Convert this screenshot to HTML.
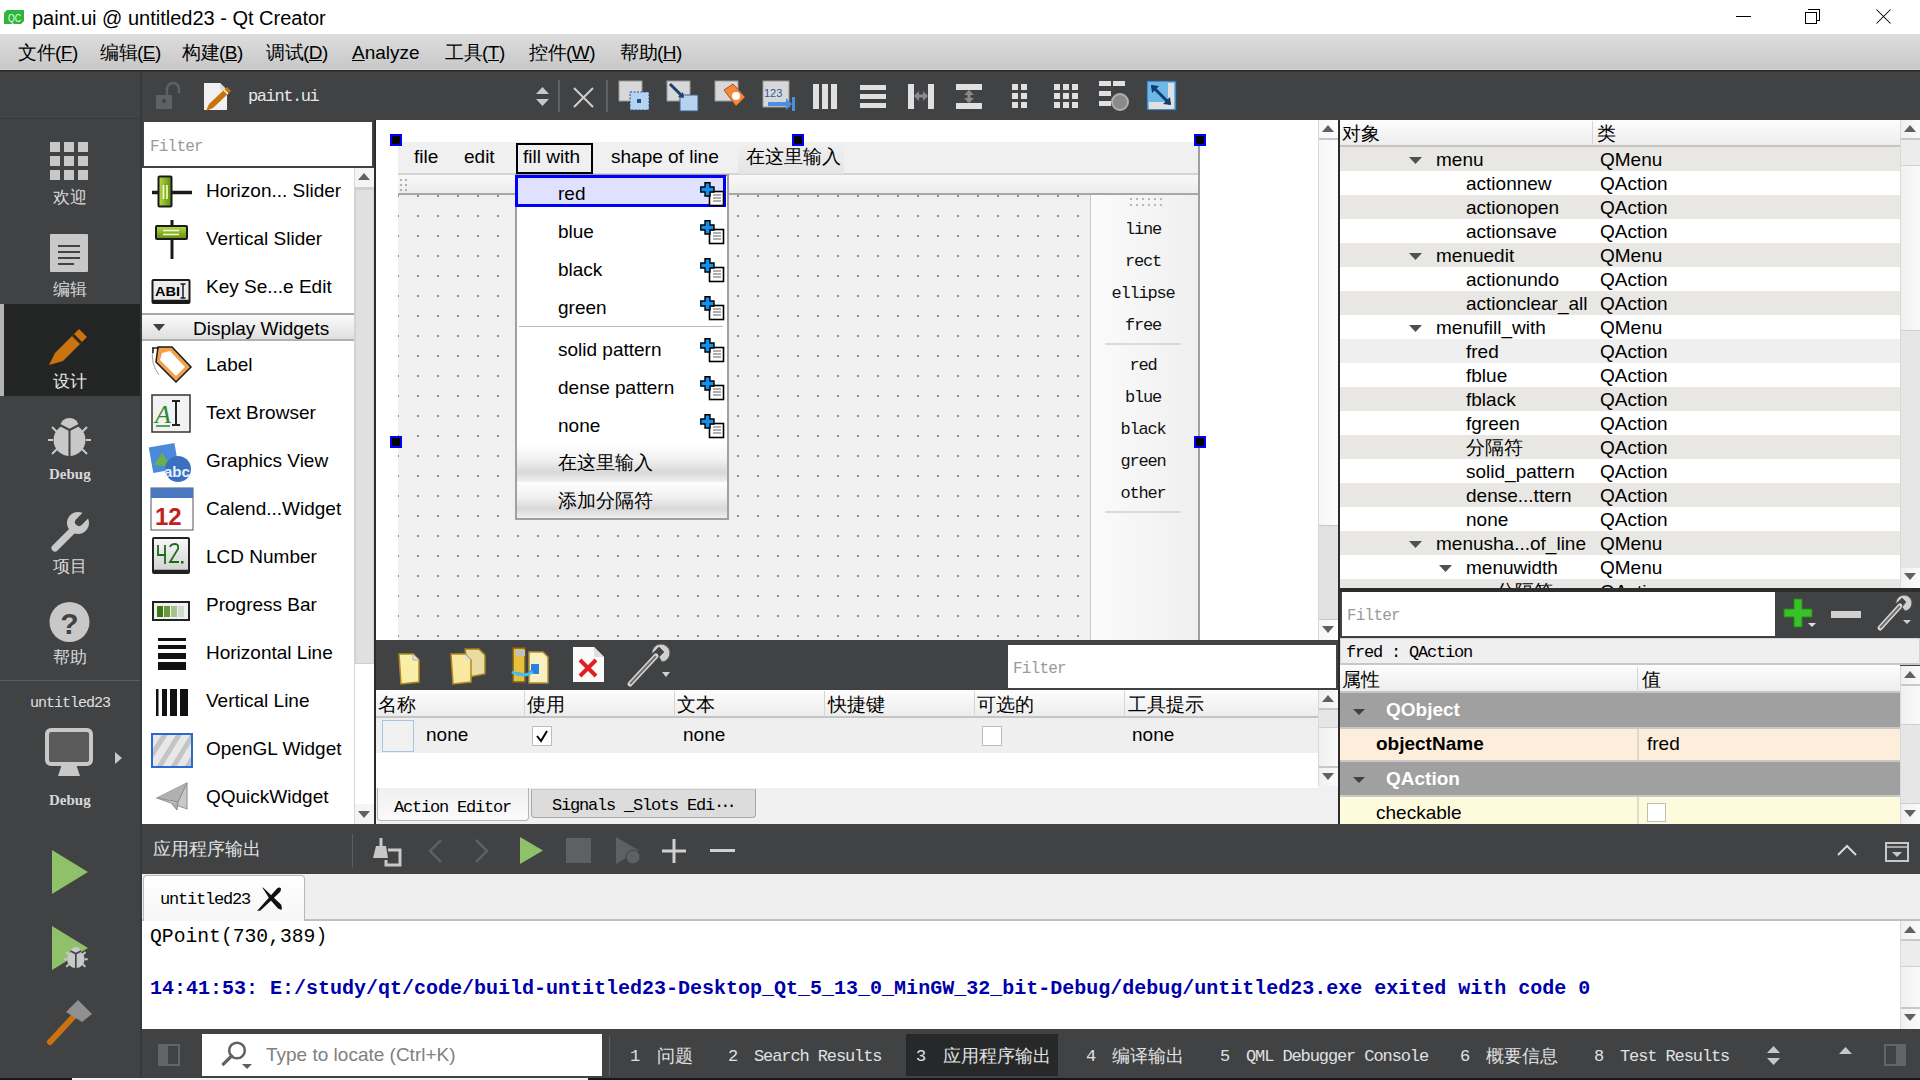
<!DOCTYPE html>
<html><head><meta charset="utf-8">
<style>
*{box-sizing:border-box;margin:0;padding:0}
html,body{width:1920px;height:1080px;overflow:hidden;background:#404244;font-family:"Liberation Sans",sans-serif;color:#000}
.a{position:absolute}
.t{position:absolute;white-space:pre;line-height:1}
.m{font-family:"Liberation Mono",monospace}
svg{position:absolute;overflow:visible}
</style></head><body>
<div class="a" style="left:0px;top:0px;width:1920px;height:34px;background:#fff"></div><svg style="left:4px;top:10px" width="21" height="15"><path d="M3 0 H20 V11 L17 14 H0 V3 Z" fill="#2fb53c"/><text x="4" y="11.5" font-size="11" fill="#e8ffe8" font-family="Liberation Sans" textLength="13" lengthAdjust="spacingAndGlyphs">QC</text></svg><div class="t" style="left:32px;top:8px;font-size:20px;">paint.ui @ untitled23 - Qt Creator</div><div class="a" style="left:1736px;top:16px;width:15px;height:1px;background:#000"></div><div class="a" style="left:1805px;top:12px;width:12px;height:12px;border:1px solid #000;background:#fff"></div><div class="a" style="left:1808px;top:9px;width:12px;height:12px;border-top:1px solid #000;border-right:1px solid #000;border-bottom:1px solid #000"></div><div class="a" style="left:1805px;top:12px;width:12px;height:12px;border:1px solid #000;background:#fff"></div><svg style="left:1876px;top:9px" width="16" height="16"><path d="M0.5 0.5L14.5 14.5M14.5 0.5L0.5 14.5" stroke="#000" stroke-width="1.05"/></svg><div class="a" style="left:0px;top:34px;width:1920px;height:35px;background:linear-gradient(#dddddd,#c8c8c8)"></div><div class="a" style="left:0px;top:69px;width:1920px;height:1px;background:#d6d6d6"></div><div class="a" style="left:0px;top:70px;width:1920px;height:1px;background:#262626"></div><div class="a" style="left:0px;top:71px;width:1920px;height:1px;background:#363738"></div><div class="t" style="left:18px;top:43px;font-size:19px;color:#000;letter-spacing:-0.5px">文件(<u>F</u>)</div><div class="t" style="left:100px;top:43px;font-size:19px;color:#000;letter-spacing:-0.5px">编辑(<u>E</u>)</div><div class="t" style="left:182px;top:43px;font-size:19px;color:#000;letter-spacing:-0.5px">构建(<u>B</u>)</div><div class="t" style="left:266px;top:43px;font-size:19px;color:#000;letter-spacing:-0.5px">调试(<u>D</u>)</div><div class="t" style="left:352px;top:43px;font-size:19px;color:#000"><u>A</u>nalyze</div><div class="t" style="left:445px;top:43px;font-size:19px;color:#000;letter-spacing:-0.5px">工具(<u>T</u>)</div><div class="t" style="left:529px;top:43px;font-size:19px;color:#000;letter-spacing:-0.5px">控件(<u>W</u>)</div><div class="t" style="left:620px;top:43px;font-size:19px;color:#000;letter-spacing:-0.5px">帮助(<u>H</u>)</div><div class="a" style="left:0px;top:72px;width:1920px;height:1008px;background:#404244"></div><div class="a" style="left:140px;top:71px;width:2px;height:1009px;background:#36383a"></div><div class="a" style="left:0px;top:118px;width:140px;height:1px;background:#353738"></div><div class="a" style="left:0px;top:304px;width:140px;height:92px;background:#232525"></div><div class="a" style="left:0px;top:304px;width:4px;height:92px;background:#b4b4b4"></div><div class="a" style="left:0px;top:680px;width:140px;height:1px;background:#5b5d5f"></div><div class="a" style="left:50px;top:142px;width:10px;height:10px;background:#c8c8c8"></div><div class="a" style="left:50px;top:156px;width:10px;height:10px;background:#c8c8c8"></div><div class="a" style="left:50px;top:170px;width:10px;height:10px;background:#c8c8c8"></div><div class="a" style="left:64px;top:142px;width:10px;height:10px;background:#c8c8c8"></div><div class="a" style="left:64px;top:156px;width:10px;height:10px;background:#c8c8c8"></div><div class="a" style="left:64px;top:170px;width:10px;height:10px;background:#c8c8c8"></div><div class="a" style="left:78px;top:142px;width:10px;height:10px;background:#c8c8c8"></div><div class="a" style="left:78px;top:156px;width:10px;height:10px;background:#c8c8c8"></div><div class="a" style="left:78px;top:170px;width:10px;height:10px;background:#c8c8c8"></div><div class="t" style="left:53px;top:189px;font-size:17px;color:#d8d8d8">欢迎</div><div class="a" style="left:50px;top:234px;width:38px;height:38px;background:#c8c8c8;border-radius:1px"></div><div class="a" style="left:58px;top:245px;width:22px;height:2px;background:#404244"></div><div class="a" style="left:58px;top:251px;width:22px;height:2px;background:#404244"></div><div class="a" style="left:58px;top:257px;width:22px;height:2px;background:#404244"></div><div class="a" style="left:58px;top:263px;width:16px;height:2px;background:#404244"></div><div class="t" style="left:53px;top:281px;font-size:17px;color:#d8d8d8">编辑</div><svg style="left:47px;top:325px" width="44" height="44"><path d="M2 40 L8 28 L32 4 L40 12 L16 36 Z" fill="#c9720e"/><path d="M26 10 L34 18" stroke="#262829" stroke-width="3"/></svg><div class="t" style="left:53px;top:373px;font-size:17px;color:#e8e8e8">设计</div><svg style="left:48px;top:416px" width="44" height="44"><ellipse cx="21.5" cy="10" rx="9" ry="8" fill="#c8c8c8"/><ellipse cx="21.5" cy="24" rx="16" ry="16" fill="#c8c8c8"/><path d="M12 9 L21.5 14 L31 9 M21.5 14 V41" stroke="#404244" stroke-width="2" fill="none"/><path d="M9 16 L4 11 M5 24 H0 M9 33 L4 38 M34 16 L39 11 M38 24 H43 M34 33 L39 38" stroke="#c8c8c8" stroke-width="2"/></svg><div class="t" style="left:49px;top:467px;font-size:15px;color:#d8d8d8;font-weight:bold;font-family:'Liberation Serif',serif">Debug</div><svg style="left:48px;top:506px" width="46" height="46"><path d="M7 42 L25 24" stroke="#c8c8c8" stroke-width="7" stroke-linecap="round"/><circle cx="30" cy="17" r="11" fill="#c8c8c8"/><path d="M31 16 L44 3" stroke="#404244" stroke-width="8" stroke-linecap="round"/></svg><div class="t" style="left:53px;top:558px;font-size:17px;color:#d8d8d8">项目</div><svg style="left:49px;top:601px" width="42" height="42"><circle cx="20.5" cy="21" r="20" fill="#c8c8c8"/><text x="20.5" y="33" font-size="30" font-weight="bold" text-anchor="middle" fill="#404244" font-family="Liberation Sans">?</text></svg><div class="t" style="left:53px;top:649px;font-size:17px;color:#d8d8d8">帮助</div><div class="t m" style="left:30px;top:696px;font-size:15px;color:#e0e0e0;letter-spacing:-1px">untitled23</div><svg style="left:45px;top:728px" width="82" height="50"><rect x="2" y="2" width="44" height="34" rx="4" fill="#5a5a5a" stroke="#c8c8c8" stroke-width="4"/><path d="M17 36 L31 36 L35 48 L13 48 Z" fill="#c8c8c8"/><path d="M70 24 L77 30 L70 36 Z" fill="#c8c8c8"/></svg><div class="t" style="left:49px;top:793px;font-size:15px;color:#d8d8d8;font-weight:bold;font-family:'Liberation Serif',serif">Debug</div><svg style="left:52px;top:850px" width="40" height="46"><path d="M0 0 L36 22 L0 44 Z" fill="#8fc06a"/></svg><svg style="left:52px;top:926px" width="46" height="50"><path d="M0 0 L36 22 L0 44 Z" fill="#8fc06a"/><g transform="translate(12,20) scale(0.55)"><ellipse cx="21.5" cy="10" rx="9" ry="8" fill="#c8c8c8"/><ellipse cx="21.5" cy="24" rx="16" ry="16" fill="#c8c8c8"/><path d="M12 9 L21.5 14 L31 9 M21.5 14 V41" stroke="#404244" stroke-width="3" fill="none"/><path d="M9 16 L4 11 M5 24 H0 M9 33 L4 38 M34 16 L39 11 M38 24 H43 M34 33 L39 38" stroke="#c8c8c8" stroke-width="3.5"/></g></svg><svg style="left:46px;top:1000px" width="50" height="46"><path d="M4 42 L30 14" stroke="#c9720e" stroke-width="6" stroke-linecap="round"/><path d="M20 12 L32 0 L46 14 L36 22 Z" fill="#909090"/></svg><svg style="left:155px;top:82px" width="28" height="28"><rect x="1" y="13" width="16" height="14" fill="#5e6062"/><path d="M12 13 V7 A6 6 0 0 1 24 7 V11" stroke="#5e6062" stroke-width="2.5" fill="none"/><circle cx="9" cy="19" r="2" fill="#404244"/></svg><svg style="left:203px;top:82px" width="30" height="30"><path d="M1 1 H17 L24 8 V28 H1 Z" fill="#f0f0f0"/><path d="M17 1 V8 H24" fill="#dcdcdc"/><path d="M3 29 L6 22 L24 5 L28 9 L10 26 Z" fill="#c9720e"/><path d="M21 8 L25 12" stroke="#fff" stroke-width="1.5"/></svg><div class="t m" style="left:248px;top:88px;font-size:17px;color:#e8e8e8;letter-spacing:-1.4px">paint.ui</div><svg style="left:535px;top:86px" width="16" height="22"><path d="M1 8 L7.5 1 L14 8 Z M1 13 L7.5 20 L14 13 Z" fill="#c8c8c8"/></svg><div class="a" style="left:558px;top:80px;width:2px;height:32px;background:#5e6062"></div><svg style="left:573px;top:87px" width="22" height="22"><path d="M1 1 L20 20 M20 1 L1 20" stroke="#d0d0d0" stroke-width="2"/></svg><div class="a" style="left:606px;top:80px;width:2px;height:32px;background:#5e6062"></div><svg style="left:618px;top:80px" width="34" height="32"><rect x="1" y="1" width="23" height="20" fill="#d8d8d8" stroke="#9a9a9a"/><rect x="12" y="12" width="19" height="18" fill="#b7d3f2" stroke="#1f4f8f" stroke-dasharray="2 1.5"/><rect x="19" y="19" width="4" height="4" fill="#1f4f8f"/></svg><svg style="left:666px;top:80px" width="34" height="32"><rect x="1" y="1" width="23" height="20" fill="#d8d8d8" stroke="#9a9a9a"/><rect x="14" y="15" width="18" height="16" fill="#b7d3f2" stroke="#3d5f86"/><path d="M4 4 L16 16" stroke="#1f3f6f" stroke-width="3"/><path d="M12 17 L18 18 L17 12 Z" fill="#1f3f6f"/></svg><svg style="left:714px;top:80px" width="34" height="32"><rect x="1" y="1" width="23" height="20" fill="#d8d8d8" stroke="#9a9a9a"/><path d="M10 10 L19 4 L31 17 L22 26 Z" fill="#f08a3c" stroke="#b05010"/><circle cx="22" cy="16" r="4" fill="#fff"/></svg><svg style="left:762px;top:80px" width="34" height="32"><rect x="1" y="1" width="26" height="26" fill="#d8d8d8" stroke="#9a9a9a"/><text x="2" y="17" font-size="11" fill="#2a5aa0" font-family="Liberation Sans">123</text><path d="M6 24 H26" stroke="#4a90e2" stroke-width="4"/><path d="M24 18 L30 24 L24 30 Z" fill="#4a90e2"/><rect x="30" y="17" width="3" height="14" fill="#4a90e2"/></svg><svg style="left:810px;top:80px" width="34" height="32"><g fill="#e0e0e0"><rect x="3" y="4" width="6" height="25"/><rect x="12" y="4" width="6" height="25"/><rect x="21" y="4" width="6" height="25"/></g></svg><svg style="left:858px;top:80px" width="34" height="32"><g fill="#e0e0e0"><rect x="2" y="5" width="26" height="5"/><rect x="2" y="14" width="26" height="5"/><rect x="2" y="23" width="26" height="5"/></g></svg><svg style="left:906px;top:80px" width="34" height="32"><g fill="#e0e0e0"><rect x="2" y="4" width="6" height="25"/><rect x="22" y="4" width="6" height="25"/></g><path d="M9 16 H21" stroke="#8a8a8a" stroke-width="3"/><path d="M8 16 L13 11 V21 Z M22 16 L17 11 V21 Z" fill="#8a8a8a"/></svg><svg style="left:954px;top:80px" width="34" height="32"><g fill="#e0e0e0"><rect x="2" y="4" width="26" height="6"/><rect x="2" y="23" width="26" height="6"/></g><path d="M15 11 V22" stroke="#8a8a8a" stroke-width="3"/><path d="M15 10 L10 15 H20 Z M15 23 L10 18 H20 Z" fill="#8a8a8a"/></svg><svg style="left:1002px;top:80px" width="34" height="32"><g fill="#e0e0e0"><rect x="10" y="4" width="6" height="6"/><rect x="19" y="4" width="6" height="6"/><rect x="10" y="13" width="6" height="6"/><rect x="19" y="13" width="6" height="6"/><rect x="10" y="22" width="6" height="6"/><rect x="19" y="22" width="6" height="6"/></g></svg><svg style="left:1050px;top:80px" width="34" height="32"><g fill="#e0e0e0"><rect x="4" y="4" width="6" height="6"/><rect x="13" y="4" width="6" height="6"/><rect x="22" y="4" width="6" height="6"/><rect x="4" y="13" width="6" height="6"/><rect x="13" y="13" width="6" height="6"/><rect x="22" y="13" width="6" height="6"/><rect x="4" y="22" width="6" height="6"/><rect x="13" y="22" width="6" height="6"/><rect x="22" y="22" width="6" height="6"/></g></svg><svg style="left:1098px;top:80px" width="34" height="32"><g fill="#e0e0e0"><rect x="1" y="1" width="12" height="5"/><rect x="15" y="1" width="12" height="5"/><rect x="1" y="11" width="12" height="5"/><rect x="1" y="21" width="12" height="5"/></g><circle cx="22" cy="22" r="8" fill="#8a8a8a" stroke="#b0b0b0" stroke-width="2"/></svg><svg style="left:1146px;top:80px" width="34" height="32"><rect x="1" y="1" width="29" height="29" fill="#6fb7e6" stroke="#2a5a8a"/><rect x="3" y="22" width="25" height="7" fill="#e0e0e0"/><rect x="22" y="3" width="6" height="19" fill="#e0e0e0"/><path d="M6 6 L24 24" stroke="#0f3f70" stroke-width="3"/><path d="M5 5 L13 6 L6 13 Z M25 25 L17 24 L24 17 Z" fill="#0f3f70"/></svg><div class="a" style="left:144px;top:122px;width:228px;height:44px;background:#fff"></div><div class="t m" style="left:150px;top:139px;font-size:16px;color:#9a9a9a;letter-spacing:-0.8px">Filter</div><div class="a" style="left:142px;top:168px;width:212px;height:656px;background:#fff"></div><div class="a" style="left:354px;top:168px;width:20px;height:656px;background:#e8e8e8;border-left:1px solid #d6d6d6"></div><div class="a" style="left:355px;top:168px;width:19px;height:19px;background:#f4f4f4"></div><svg style="left:357px;top:172px" width="14" height="10"><path d="M1 8 L7 1 L13 8 Z" fill="#606060"/></svg><div class="a" style="left:355px;top:187px;width:19px;height:2px;background:#d0d0d0"></div><div class="a" style="left:355px;top:189px;width:19px;height:475px;background:#e0e0e0;border:1px solid #cfcfcf"></div><div class="a" style="left:355px;top:664px;width:19px;height:140px;background:#fff"></div><div class="a" style="left:355px;top:804px;width:19px;height:20px;background:#f4f4f4"></div><svg style="left:357px;top:810px" width="14" height="10"><path d="M1 1 L7 8 L13 1 Z" fill="#606060"/></svg><div class="a" style="left:374px;top:120px;width:2px;height:704px;background:#2b2c2d"></div><svg style="left:150px;top:191px;transform:translateY(-16px)" width="44" height="34"><defs><linearGradient id="gs" x1="0" x2="1"><stop offset="0" stop-color="#b6dc4a"/><stop offset="1" stop-color="#5e8c0c"/></linearGradient></defs><path d="M2 17.5 H42" stroke="#1a1a1a" stroke-width="3.5"/><rect x="8.5" y="1.5" width="13" height="30" rx="1" fill="url(#gs)" stroke="#1a1a1a" stroke-width="2"/><path d="M13.5 10 V24 M17 10 V24" stroke="#f4ffd0" stroke-width="1.6"/></svg><div class="t" style="left:206px;top:181px;font-size:19px;">Horizon... Slider</div><svg style="left:150px;top:239px;transform:translateY(-20px)" width="44" height="42"><defs><linearGradient id="gv" x1="0" y1="0" x2="0" y2="1"><stop offset="0" stop-color="#b6dc4a"/><stop offset="1" stop-color="#5e8c0c"/></linearGradient></defs><path d="M22 1 V40" stroke="#1a1a1a" stroke-width="3"/><rect x="6" y="7" width="31" height="13" rx="1" fill="url(#gv)" stroke="#1a1a1a" stroke-width="2"/><path d="M13 11.5 H29 M13 15.5 H29" stroke="#f4ffd0" stroke-width="1.6"/></svg><div class="t" style="left:206px;top:229px;font-size:19px;">Vertical Slider</div><svg style="left:150px;top:287px;transform:translateY(-8px)" width="44" height="30"><rect x="2.5" y="1" width="37" height="23" rx="1" fill="#ececec" stroke="#1a1a1a" stroke-width="2"/><path d="M3 22 H39" stroke="#1a1a1a" stroke-width="2.5"/><text x="5" y="17" font-size="13" font-weight="bold" font-family="Liberation Sans" textLength="25" lengthAdjust="spacingAndGlyphs">ABI</text><path d="M33 5 V19 M30.5 5 H35.5 M30.5 19 H35.5" stroke="#1a1a1a" stroke-width="1.5"/></svg><div class="t" style="left:206px;top:277px;font-size:19px;">Key Se...e Edit</div><div class="a" style="left:142px;top:313px;width:212px;height:2px;background:#a8a8a8"></div><div class="a" style="left:142px;top:315px;width:212px;height:25px;background:linear-gradient(#fafafa,#dedede)"></div><div class="a" style="left:142px;top:339px;width:212px;height:2px;background:#b0b0b0"></div><svg style="left:153px;top:323px" width="14" height="10"><path d="M0 1 L12 1 L6 8 Z" fill="#404040"/></svg><div class="t" style="left:193px;top:319px;font-size:19px;">Display Widgets</div><svg style="left:150px;top:365px;transform:translateY(-20px)" width="44" height="42"><path d="M8 2 L22 2 L41 22 L26 37 L6 17 Z" fill="#f2a04a" stroke="#1a1a1a" stroke-width="1.5"/><path d="M12 8 L20 6 L35 22 L26 31 L10 15 Z" fill="#fff"/><path d="M3 4 Q0 18 9 30" stroke="#a0a0a0" stroke-width="1" fill="none"/><path d="M2 3 H9 M3 3 V8" stroke="#222" stroke-width="1.5"/></svg><div class="t" style="left:206px;top:355px;font-size:19px;">Label</div><svg style="left:150px;top:413px;transform:translateY(-20px)" width="44" height="42"><rect x="2" y="2" width="38" height="37" fill="#f2f2f2" stroke="#333" stroke-width="1.5"/><text x="5" y="30" font-size="26" font-style="italic" fill="#2a8a2a" font-family="Liberation Serif">A</text><path d="M6 33 H20" stroke="#2a8a2a" stroke-width="1.5"/><path d="M26 8 V32 M22 8 H30 M22 32 H30" stroke="#222" stroke-width="2"/></svg><div class="t" style="left:206px;top:403px;font-size:19px;">Text Browser</div><svg style="left:150px;top:461px;transform:translateY(-22px)" width="46" height="44"><rect x="1" y="6" width="26" height="26" fill="#4a8ad8" transform="rotate(-10 14 20)"/><path d="M4 26 L12 14 L22 28 Z" fill="#6ab04c"/><circle cx="28" cy="30" r="13" fill="#3a70c0"/><text x="14" y="38" font-size="15" font-weight="bold" fill="#e8f0ff" font-family="Liberation Sans">abc</text></svg><div class="t" style="left:206px;top:451px;font-size:19px;">Graphics View</div><svg style="left:150px;top:509px;transform:translateY(-22px)" width="44" height="44"><rect x="1" y="1" width="42" height="42" fill="#fff" stroke="#555"/><rect x="1" y="1" width="42" height="10" fill="#4a78c0"/><text x="5" y="38" font-size="24" font-weight="bold" fill="#c02020" font-family="Liberation Sans">12</text></svg><div class="t" style="left:206px;top:499px;font-size:19px;">Calend...Widget</div><svg style="left:150px;top:557px;transform:translateY(-21px)" width="44" height="40"><defs><linearGradient id="gl" x1="0" y1="0" x2="0" y2="1"><stop offset="0" stop-color="#f8f8f8"/><stop offset="1" stop-color="#d0d0d0"/></linearGradient></defs><rect x="3" y="2" width="36" height="35" rx="1" fill="url(#gl)" stroke="#222" stroke-width="2"/><path d="M3 35 H39" stroke="#222" stroke-width="2.5"/><path d="M8 9 V19 H16 M15 9 V28 M20 11 Q21 8 25 8 Q29 8 28 13 L20 26 H29" stroke="#1a6a1a" stroke-width="1.8" fill="none"/><rect x="31" y="25" width="2.5" height="2.5" fill="#1a6a1a"/></svg><div class="t" style="left:206px;top:547px;font-size:19px;">LCD Number</div><svg style="left:150px;top:605px;transform:translateY(-4px)" width="44" height="26"><rect x="3" y="1" width="36" height="18" fill="#f0f0f0" stroke="#222" stroke-width="2"/><rect x="7" y="5" width="6" height="11" fill="#3a7a10"/><rect x="14" y="5" width="6" height="11" fill="#6a9a40"/><rect x="21" y="5" width="6" height="11" fill="#a8c090"/><rect x="28" y="5" width="6" height="11" fill="#d0dcc8"/></svg><div class="t" style="left:206px;top:595px;font-size:19px;">Progress Bar</div><svg style="left:150px;top:653px;transform:translateY(-16px)" width="44" height="38"><g fill="#111"><rect x="8" y="1" width="28" height="3"/><rect x="8" y="8" width="28" height="4"/><rect x="8" y="16" width="28" height="6"/><rect x="8" y="25" width="28" height="8"/></g></svg><div class="t" style="left:206px;top:643px;font-size:19px;">Horizontal Line</div><svg style="left:150px;top:701px;transform:translateY(-13px)" width="44" height="38"><g fill="#111"><rect x="6" y="1" width="2.5" height="27"/><rect x="12" y="1" width="5" height="27"/><rect x="20" y="1" width="7" height="27"/><rect x="30" y="1" width="8" height="27"/></g></svg><div class="t" style="left:206px;top:691px;font-size:19px;">Vertical Line</div><svg style="left:150px;top:749px;transform:translateY(-16px)" width="44" height="38"><defs><clipPath id="cg"><rect x="3" y="2" width="38" height="31"/></clipPath></defs><rect x="2" y="1" width="40" height="33" fill="#e8e8e8" stroke="#2a6ad0" stroke-width="2"/><g clip-path="url(#cg)" stroke="#c4c4c4" stroke-width="5"><path d="M-6 34 L16 0 M8 36 L30 0 M22 36 L44 0 M36 36 L58 0"/></g></svg><div class="t" style="left:206px;top:739px;font-size:19px;">OpenGL Widget</div><svg style="left:150px;top:797px;transform:translateY(-15px)" width="44" height="38"><path d="M7 16 L37 1 L37 27 Z" fill="#c8c8c8" stroke="#9a9a9a" stroke-width="1.2"/><path d="M7 16 L28 20 L37 1 M28 20 L27 28 L22 22" stroke="#8a8a8a" stroke-width="1" fill="#b0b0b0"/></svg><div class="t" style="left:206px;top:787px;font-size:19px;">QQuickWidget</div><div class="a" style="left:376px;top:120px;width:942px;height:520px;background:#fff"></div><div class="a" style="left:398px;top:142px;width:802px;height:498px;background:#f0f0f0"></div><svg style="left:398px;top:194px" width="692" height="446"><defs><pattern id="dp" x="-1" y="1" width="20" height="20" patternUnits="userSpaceOnUse"><rect x="0" y="0" width="2" height="2" fill="#8e8e8e"/></pattern></defs><rect width="692" height="446" fill="url(#dp)"/></svg><div class="a" style="left:398px;top:173px;width:802px;height:2px;background:#d4d4d4"></div><div class="a" style="left:398px;top:175px;width:800px;height:19px;background:linear-gradient(#f8f8f8,#ececec)"></div><div class="a" style="left:398px;top:193px;width:800px;height:2px;background:#a8a8a8"></div><svg style="left:400px;top:179px" width="10" height="16"><g fill="#b0b0b0"><rect x="0" y="0" width="2" height="2"/><rect x="5" y="0" width="2" height="2"/><rect x="0" y="5" width="2" height="2"/><rect x="5" y="5" width="2" height="2"/><rect x="0" y="10" width="2" height="2"/><rect x="5" y="10" width="2" height="2"/></g></svg><div class="t" style="left:414px;top:147px;font-size:19px;">file</div><div class="t" style="left:464px;top:147px;font-size:19px;">edit</div><div class="a" style="left:516px;top:143px;width:77px;height:31px;border:2px solid #000"></div><div class="t" style="left:523px;top:147px;font-size:19px;">fill with</div><div class="t" style="left:611px;top:147px;font-size:19px;">shape of line</div><div class="a" style="left:738px;top:143px;width:106px;height:31px;background:linear-gradient(#f0f0f0,#e4e4e4)"></div><div class="t" style="left:746px;top:147px;font-size:19px;">在这里输入</div><div class="a" style="left:1090px;top:195px;width:110px;height:445px;background:linear-gradient(90deg,#fbfbfb,#efefef)"></div><div class="a" style="left:1090px;top:195px;width:1px;height:445px;background:#c9c9c9"></div><svg style="left:1130px;top:198px" width="36" height="10"><g fill="#b8b8b8"><rect x="0" y="0" width="2" height="2"/><rect x="0" y="6" width="2" height="2"/><rect x="6" y="0" width="2" height="2"/><rect x="6" y="6" width="2" height="2"/><rect x="12" y="0" width="2" height="2"/><rect x="12" y="6" width="2" height="2"/><rect x="18" y="0" width="2" height="2"/><rect x="18" y="6" width="2" height="2"/><rect x="24" y="0" width="2" height="2"/><rect x="24" y="6" width="2" height="2"/><rect x="30" y="0" width="2" height="2"/><rect x="30" y="6" width="2" height="2"/></g></svg><div class="t m" style="left:1088px;top:221px;width:110px;text-align:center;font-size:17px;letter-spacing:-1.2px;color:#111">line</div><div class="t m" style="left:1088px;top:253px;width:110px;text-align:center;font-size:17px;letter-spacing:-1.2px;color:#111">rect</div><div class="t m" style="left:1088px;top:285px;width:110px;text-align:center;font-size:17px;letter-spacing:-1.2px;color:#111">ellipse</div><div class="t m" style="left:1088px;top:317px;width:110px;text-align:center;font-size:17px;letter-spacing:-1.2px;color:#111">free</div><div class="t m" style="left:1088px;top:357px;width:110px;text-align:center;font-size:17px;letter-spacing:-1.2px;color:#111">red</div><div class="t m" style="left:1088px;top:389px;width:110px;text-align:center;font-size:17px;letter-spacing:-1.2px;color:#111">blue</div><div class="t m" style="left:1088px;top:421px;width:110px;text-align:center;font-size:17px;letter-spacing:-1.2px;color:#111">black</div><div class="t m" style="left:1088px;top:453px;width:110px;text-align:center;font-size:17px;letter-spacing:-1.2px;color:#111">green</div><div class="t m" style="left:1088px;top:485px;width:110px;text-align:center;font-size:17px;letter-spacing:-1.2px;color:#111">other</div><div class="a" style="left:1105px;top:343px;width:76px;height:2px;background:#dadada"></div><div class="a" style="left:1105px;top:511px;width:76px;height:2px;background:#dadada"></div><div class="a" style="left:1198px;top:142px;width:2px;height:498px;background:#a0a0a0"></div><div class="a" style="left:390px;top:134px;width:12px;height:12px;background:#000;border:2px solid #0000ff"></div><div class="a" style="left:792px;top:134px;width:12px;height:12px;background:#000;border:2px solid #0000ff"></div><div class="a" style="left:1194px;top:134px;width:12px;height:12px;background:#000;border:2px solid #0000ff"></div><div class="a" style="left:390px;top:436px;width:12px;height:12px;background:#000;border:2px solid #0000ff"></div><div class="a" style="left:1194px;top:436px;width:12px;height:12px;background:#000;border:2px solid #0000ff"></div><div class="a" style="left:515px;top:174px;width:214px;height:346px;background:#fff;border:2px solid #a0a0a0"></div><div class="a" style="left:515px;top:175px;width:211px;height:32px;background:#e0e0ff;border:3px solid #0000ff"></div><div class="t" style="left:558px;top:184px;font-size:19px;">red</div><svg style="left:700px;top:182px" width="26" height="25"><rect x="9.5" y="9.5" width="14" height="14" fill="#fff" stroke="#000" stroke-width="1.6"/><path d="M13 13 H21 M13 16 H21 M13 19 H21" stroke="#606060" stroke-width="1.2"/><path d="M5 0.8 H10 V5 H14 V10 H10 V14 H5 V10 H0.8 V5 H5 Z" fill="#1090f0" stroke="#000" stroke-width="1.4"/></svg><div class="t" style="left:558px;top:222px;font-size:19px;">blue</div><svg style="left:700px;top:220px" width="26" height="25"><rect x="9.5" y="9.5" width="14" height="14" fill="#fff" stroke="#000" stroke-width="1.6"/><path d="M13 13 H21 M13 16 H21 M13 19 H21" stroke="#606060" stroke-width="1.2"/><path d="M5 0.8 H10 V5 H14 V10 H10 V14 H5 V10 H0.8 V5 H5 Z" fill="#1090f0" stroke="#000" stroke-width="1.4"/></svg><div class="t" style="left:558px;top:260px;font-size:19px;">black</div><svg style="left:700px;top:258px" width="26" height="25"><rect x="9.5" y="9.5" width="14" height="14" fill="#fff" stroke="#000" stroke-width="1.6"/><path d="M13 13 H21 M13 16 H21 M13 19 H21" stroke="#606060" stroke-width="1.2"/><path d="M5 0.8 H10 V5 H14 V10 H10 V14 H5 V10 H0.8 V5 H5 Z" fill="#1090f0" stroke="#000" stroke-width="1.4"/></svg><div class="t" style="left:558px;top:298px;font-size:19px;">green</div><svg style="left:700px;top:296px" width="26" height="25"><rect x="9.5" y="9.5" width="14" height="14" fill="#fff" stroke="#000" stroke-width="1.6"/><path d="M13 13 H21 M13 16 H21 M13 19 H21" stroke="#606060" stroke-width="1.2"/><path d="M5 0.8 H10 V5 H14 V10 H10 V14 H5 V10 H0.8 V5 H5 Z" fill="#1090f0" stroke="#000" stroke-width="1.4"/></svg><div class="t" style="left:558px;top:340px;font-size:19px;">solid pattern</div><svg style="left:700px;top:338px" width="26" height="25"><rect x="9.5" y="9.5" width="14" height="14" fill="#fff" stroke="#000" stroke-width="1.6"/><path d="M13 13 H21 M13 16 H21 M13 19 H21" stroke="#606060" stroke-width="1.2"/><path d="M5 0.8 H10 V5 H14 V10 H10 V14 H5 V10 H0.8 V5 H5 Z" fill="#1090f0" stroke="#000" stroke-width="1.4"/></svg><div class="t" style="left:558px;top:378px;font-size:19px;">dense pattern</div><svg style="left:700px;top:376px" width="26" height="25"><rect x="9.5" y="9.5" width="14" height="14" fill="#fff" stroke="#000" stroke-width="1.6"/><path d="M13 13 H21 M13 16 H21 M13 19 H21" stroke="#606060" stroke-width="1.2"/><path d="M5 0.8 H10 V5 H14 V10 H10 V14 H5 V10 H0.8 V5 H5 Z" fill="#1090f0" stroke="#000" stroke-width="1.4"/></svg><div class="t" style="left:558px;top:416px;font-size:19px;">none</div><svg style="left:700px;top:414px" width="26" height="25"><rect x="9.5" y="9.5" width="14" height="14" fill="#fff" stroke="#000" stroke-width="1.6"/><path d="M13 13 H21 M13 16 H21 M13 19 H21" stroke="#606060" stroke-width="1.2"/><path d="M5 0.8 H10 V5 H14 V10 H10 V14 H5 V10 H0.8 V5 H5 Z" fill="#1090f0" stroke="#000" stroke-width="1.4"/></svg><div class="a" style="left:519px;top:326px;width:204px;height:1px;background:#b8b8b8"></div><div class="a" style="left:517px;top:444px;width:210px;height:38px;background:linear-gradient(#fefefe,#f2f2f2 40%,#d8d8d8 75%,#f0f0f0)"></div><div class="a" style="left:517px;top:482px;width:210px;height:36px;background:linear-gradient(#fefefe,#f2f2f2 40%,#d8d8d8 75%,#f0f0f0)"></div><div class="t" style="left:558px;top:453px;font-size:19px;">在这里输入</div><div class="t" style="left:558px;top:491px;font-size:19px;">添加分隔符</div><div class="a" style="left:1318px;top:120px;width:20px;height:520px;background:linear-gradient(90deg,#f6f6f6,#fdfdfd)"></div><div class="a" style="left:1318px;top:120px;width:1px;height:520px;background:#d8d8d8"></div><svg style="left:1321px;top:124px" width="14" height="10"><path d="M1 8 L7 1 L13 8 Z" fill="#606060"/></svg><div class="a" style="left:1319px;top:138px;width:19px;height:2px;background:#c8c8c8"></div><div class="a" style="left:1319px;top:525px;width:19px;height:95px;background:#e2e2e2;border-top:1px solid #c8c8c8;border-bottom:1px solid #c8c8c8"></div><svg style="left:1321px;top:625px" width="14" height="10"><path d="M1 1 L7 8 L13 1 Z" fill="#606060"/></svg><div class="a" style="left:1338px;top:120px;width:2px;height:704px;background:#2b2c2d"></div><svg style="left:397px;top:652px" width="26" height="34"><path d="M2 2 H16 L22 8 V30 L4 32 Z" fill="#f8eea8" stroke="#b08a20" stroke-width="1.5"/><path d="M16 2 V8 H22" fill="#e0e0e0" stroke="#b0b0b0"/></svg><svg style="left:449px;top:646px" width="40" height="40"><path d="M16 3 H30 L36 9 V28 L20 31 Z" fill="#e8dca0" stroke="#a08020" stroke-width="1.5"/><path d="M2 8 H16 L22 14 V36 L4 38 Z" fill="#f8e8a0" stroke="#b08a20" stroke-width="1.5"/><path d="M16 8 V14 H22" fill="#e0e0e0"/></svg><svg style="left:511px;top:646px" width="40" height="40"><path d="M2 2 H14 V36 H2 Z" fill="#e8c040" stroke="#806010" stroke-width="1.5"/><rect x="5" y="4" width="9" height="6" fill="#c0c0c0"/><path d="M18 6 H32 L37 11 V37 L18 37 Z" fill="#f8f0c0" stroke="#b09030" stroke-width="1.5"/><path d="M4 26 Q14 30 20 24 L20 18 L28 18 L28 28 L20 28" fill="#2a80e0"/><path d="M1 26 Q12 32 22 26" stroke="#40c0f0" stroke-width="3" fill="none"/></svg><svg style="left:572px;top:646px" width="34" height="38"><path d="M1 1 H22 L32 11 V36 H1 Z" fill="#fafafa"/><path d="M22 1 V11 H32" fill="#e0e0e0"/><path d="M8 14 L24 30 M24 14 L8 30" stroke="#e02020" stroke-width="4"/></svg><svg style="left:626px;top:644px" width="48" height="44"><path d="M4 40 L30 12" stroke="#d8d8d8" stroke-width="5" stroke-linecap="round"/><path d="M4 40 L30 12" stroke="#707070" stroke-width="2"/><path d="M26 10 A9 9 0 1 1 36 18 L33 13 L38 8 L33 3 Z" fill="#d0d0d0" stroke="#606060"/><path d="M36 28 L44 28 L40 33 Z" fill="#d0d0d0"/></svg><div class="a" style="left:1008px;top:645px;width:328px;height:43px;background:#fff"></div><div class="t m" style="left:1013px;top:661px;font-size:16px;color:#9a9a9a;letter-spacing:-0.8px">Filter</div><div class="a" style="left:376px;top:690px;width:942px;height:27px;background:linear-gradient(#fdfdfd,#ececec)"></div><div class="a" style="left:376px;top:716px;width:942px;height:2px;background:#c4c4c4"></div><div class="a" style="left:524px;top:691px;width:1px;height:26px;background:#d6d6d6"></div><div class="a" style="left:674px;top:691px;width:1px;height:26px;background:#d6d6d6"></div><div class="a" style="left:824px;top:691px;width:1px;height:26px;background:#d6d6d6"></div><div class="a" style="left:974px;top:691px;width:1px;height:26px;background:#d6d6d6"></div><div class="a" style="left:1124px;top:691px;width:1px;height:26px;background:#d6d6d6"></div><div class="t" style="left:378px;top:695px;font-size:19px;">名称</div><div class="t" style="left:527px;top:695px;font-size:19px;">使用</div><div class="t" style="left:677px;top:695px;font-size:19px;">文本</div><div class="t" style="left:828px;top:695px;font-size:19px;">快捷键</div><div class="t" style="left:977px;top:695px;font-size:19px;">可选的</div><div class="t" style="left:1128px;top:695px;font-size:19px;">工具提示</div><div class="a" style="left:376px;top:718px;width:942px;height:35px;background:#efefef"></div><div class="a" style="left:382px;top:720px;width:32px;height:32px;border:1px solid #a9c4e0;background:#f0f0f0"></div><div class="t" style="left:426px;top:725px;font-size:19px;">none</div><div class="a" style="left:532px;top:726px;width:20px;height:20px;background:#fff;border:1px solid #bdbdbd"></div><svg style="left:535px;top:729px" width="14" height="14"><path d="M2 7 L6 12 L12 2" stroke="#000" stroke-width="2" fill="none"/></svg><div class="t" style="left:683px;top:725px;font-size:19px;">none</div><div class="a" style="left:982px;top:726px;width:20px;height:20px;background:#fff;border:1px solid #bdbdbd"></div><div class="t" style="left:1132px;top:725px;font-size:19px;">none</div><div class="a" style="left:376px;top:753px;width:942px;height:35px;background:#fff"></div><div class="a" style="left:1318px;top:690px;width:20px;height:96px;background:linear-gradient(90deg,#f0f0f0,#fafafa);border-left:1px solid #d8d8d8"></div><svg style="left:1321px;top:694px" width="14" height="10"><path d="M1 8 L7 1 L13 8 Z" fill="#606060"/></svg><div class="a" style="left:1319px;top:708px;width:19px;height:2px;background:#c8c8c8"></div><div class="a" style="left:1319px;top:710px;width:19px;height:18px;background:#e6e6e6;border-bottom:1px solid #d0d0d0"></div><div class="a" style="left:1319px;top:766px;width:19px;height:2px;background:#c8c8c8"></div><svg style="left:1321px;top:772px" width="14" height="10"><path d="M1 1 L7 8 L13 1 Z" fill="#606060"/></svg><div class="a" style="left:376px;top:788px;width:962px;height:36px;background:#f0f0f0"></div><div class="a" style="left:1318px;top:786px;width:20px;height:2px;background:#f0f0f0"></div><div class="a" style="left:377px;top:788px;width:152px;height:33px;background:linear-gradient(#f0f0f0,#fafafa);border:1px solid #b4b4b4;border-top:none;border-radius:0 0 4px 4px"></div><div class="t m" style="left:394px;top:799px;font-size:17px;color:#000;letter-spacing:-1.2px">Action Editor</div><div class="a" style="left:531px;top:789px;width:225px;height:29px;background:#dcdcdc;border:1px solid #a8a8a8;border-top:1px solid #c8c8c8;border-radius:0 0 4px 4px"></div><div class="t m" style="left:552px;top:797px;font-size:17px;color:#000;letter-spacing:-1.2px">Signals _Slots Edi<span style="letter-spacing:-4px">···</span></div><div class="a" style="left:1340px;top:120px;width:560px;height:27px;background:linear-gradient(#fdfdfd,#ececec)"></div><div class="a" style="left:1340px;top:145px;width:560px;height:2px;background:#c4c4c4"></div><div class="a" style="left:1592px;top:121px;width:1px;height:25px;background:#d6d6d6"></div><div class="t" style="left:1342px;top:124px;font-size:19px;">对象</div><div class="t" style="left:1597px;top:124px;font-size:19px;">类</div><div class="a" style="left:1340px;top:147px;width:560px;height:441px;overflow:hidden"><div class="a" style="left:0;top:0px;width:560px;height:24px;background:#e9e7e3"></div><svg style="left:69px;top:10px" width="14" height="8"><path d="M0 0 H13 L6.5 7 Z" fill="#505050"/></svg><div class="t" style="left:96px;top:3px;font-size:19px">menu</div><div class="t" style="left:260px;top:3px;font-size:19px">QMenu</div><div class="a" style="left:0;top:24px;width:560px;height:24px;background:#fff"></div><div class="t" style="left:126px;top:27px;font-size:19px">actionnew</div><div class="t" style="left:260px;top:27px;font-size:19px">QAction</div><div class="a" style="left:0;top:48px;width:560px;height:24px;background:#e9e7e3"></div><div class="t" style="left:126px;top:51px;font-size:19px">actionopen</div><div class="t" style="left:260px;top:51px;font-size:19px">QAction</div><div class="a" style="left:0;top:72px;width:560px;height:24px;background:#fff"></div><div class="t" style="left:126px;top:75px;font-size:19px">actionsave</div><div class="t" style="left:260px;top:75px;font-size:19px">QAction</div><div class="a" style="left:0;top:96px;width:560px;height:24px;background:#e9e7e3"></div><svg style="left:69px;top:106px" width="14" height="8"><path d="M0 0 H13 L6.5 7 Z" fill="#505050"/></svg><div class="t" style="left:96px;top:99px;font-size:19px">menuedit</div><div class="t" style="left:260px;top:99px;font-size:19px">QMenu</div><div class="a" style="left:0;top:120px;width:560px;height:24px;background:#fff"></div><div class="t" style="left:126px;top:123px;font-size:19px">actionundo</div><div class="t" style="left:260px;top:123px;font-size:19px">QAction</div><div class="a" style="left:0;top:144px;width:560px;height:24px;background:#e9e7e3"></div><div class="t" style="left:126px;top:147px;font-size:19px">actionclear_all</div><div class="t" style="left:260px;top:147px;font-size:19px">QAction</div><div class="a" style="left:0;top:168px;width:560px;height:24px;background:#fff"></div><svg style="left:69px;top:178px" width="14" height="8"><path d="M0 0 H13 L6.5 7 Z" fill="#505050"/></svg><div class="t" style="left:96px;top:171px;font-size:19px">menufill_with</div><div class="t" style="left:260px;top:171px;font-size:19px">QMenu</div><div class="a" style="left:0;top:192px;width:560px;height:24px;background:#efefef"></div><div class="t" style="left:126px;top:195px;font-size:19px">fred</div><div class="t" style="left:260px;top:195px;font-size:19px">QAction</div><div class="a" style="left:0;top:216px;width:560px;height:24px;background:#fff"></div><div class="t" style="left:126px;top:219px;font-size:19px">fblue</div><div class="t" style="left:260px;top:219px;font-size:19px">QAction</div><div class="a" style="left:0;top:240px;width:560px;height:24px;background:#e9e7e3"></div><div class="t" style="left:126px;top:243px;font-size:19px">fblack</div><div class="t" style="left:260px;top:243px;font-size:19px">QAction</div><div class="a" style="left:0;top:264px;width:560px;height:24px;background:#fff"></div><div class="t" style="left:126px;top:267px;font-size:19px">fgreen</div><div class="t" style="left:260px;top:267px;font-size:19px">QAction</div><div class="a" style="left:0;top:288px;width:560px;height:24px;background:#e9e7e3"></div><div class="t" style="left:126px;top:291px;font-size:19px">分隔符</div><div class="t" style="left:260px;top:291px;font-size:19px">QAction</div><div class="a" style="left:0;top:312px;width:560px;height:24px;background:#fff"></div><div class="t" style="left:126px;top:315px;font-size:19px">solid_pattern</div><div class="t" style="left:260px;top:315px;font-size:19px">QAction</div><div class="a" style="left:0;top:336px;width:560px;height:24px;background:#e9e7e3"></div><div class="t" style="left:126px;top:339px;font-size:19px">dense...ttern</div><div class="t" style="left:260px;top:339px;font-size:19px">QAction</div><div class="a" style="left:0;top:360px;width:560px;height:24px;background:#fff"></div><div class="t" style="left:126px;top:363px;font-size:19px">none</div><div class="t" style="left:260px;top:363px;font-size:19px">QAction</div><div class="a" style="left:0;top:384px;width:560px;height:24px;background:#e9e7e3"></div><svg style="left:69px;top:394px" width="14" height="8"><path d="M0 0 H13 L6.5 7 Z" fill="#505050"/></svg><div class="t" style="left:96px;top:387px;font-size:19px">menusha...of_line</div><div class="t" style="left:260px;top:387px;font-size:19px">QMenu</div><div class="a" style="left:0;top:408px;width:560px;height:24px;background:#fff"></div><svg style="left:99px;top:418px" width="14" height="8"><path d="M0 0 H13 L6.5 7 Z" fill="#505050"/></svg><div class="t" style="left:126px;top:411px;font-size:19px">menuwidth</div><div class="t" style="left:260px;top:411px;font-size:19px">QMenu</div><div class="a" style="left:0;top:432px;width:560px;height:24px;background:#e9e7e3"></div><div class="t" style="left:156px;top:435px;font-size:19px">分隔符</div><div class="t" style="left:260px;top:435px;font-size:19px">QAction</div></div><div class="a" style="left:1900px;top:120px;width:20px;height:468px;background:linear-gradient(90deg,#f0f0f0,#fafafa);border-left:1px solid #d8d8d8"></div><svg style="left:1903px;top:124px" width="14" height="10"><path d="M1 8 L7 1 L13 8 Z" fill="#606060"/></svg><div class="a" style="left:1901px;top:138px;width:19px;height:2px;background:#c8c8c8"></div><div class="a" style="left:1901px;top:140px;width:19px;height:26px;background:#ececec;border-bottom:1px solid #d0d0d0"></div><div class="a" style="left:1901px;top:330px;width:19px;height:238px;background:#e6e6e6;border-top:1px solid #d0d0d0"></div><svg style="left:1903px;top:572px" width="14" height="10"><path d="M1 1 L7 8 L13 1 Z" fill="#606060"/></svg><div class="a" style="left:1342px;top:592px;width:433px;height:44px;background:#fff"></div><div class="t m" style="left:1347px;top:608px;font-size:16px;color:#9a9a9a;letter-spacing:-0.8px">Filter</div><svg style="left:1782px;top:597px" width="36" height="34"><path d="M12 2 H20 V12 H30 V20 H20 V30 H12 V20 H2 V12 H12 Z" fill="#3ac02a" stroke="#208a10"/><path d="M26 26 H34 L30 30 Z" fill="#e0e0e0"/></svg><div class="a" style="left:1831px;top:611px;width:30px;height:7px;background:#d0d0d0"></div><svg style="left:1876px;top:596px" width="36" height="36"><path d="M4 32 L24 10" stroke="#d8d8d8" stroke-width="5" stroke-linecap="round"/><path d="M4 32 L24 10" stroke="#707070" stroke-width="2"/><path d="M20 8 A8 8 0 1 1 29 15 L26 11 L30 6 L26 2 Z" fill="#d0d0d0" stroke="#606060"/><path d="M27 24 L35 24 L31 28 Z" fill="#d0d0d0"/></svg><div class="a" style="left:1340px;top:638px;width:580px;height:27px;background:#efefef;border:1px solid #d4d4d4;border-bottom:2px solid #c8c8c8"></div><div class="t m" style="left:1346px;top:644px;font-size:17px;letter-spacing:-1.2px">fred : QAction</div><div class="a" style="left:1340px;top:665px;width:560px;height:28px;background:linear-gradient(#fdfdfd,#ececec)"></div><div class="a" style="left:1340px;top:691px;width:560px;height:2px;background:#c4c4c4"></div><div class="a" style="left:1637px;top:667px;width:1px;height:25px;background:#d6d6d6"></div><div class="t" style="left:1342px;top:670px;font-size:19px;">属性</div><div class="t" style="left:1642px;top:670px;font-size:19px;">值</div><div class="a" style="left:1340px;top:693px;width:560px;height:35px;background:#a0a0a0"></div><div class="a" style="left:1340px;top:727px;width:560px;height:2px;background:#c8c8c8"></div><svg style="left:1353px;top:709px" width="14" height="8"><path d="M0 0 H12 L6 6 Z" fill="#404040"/></svg><div class="t" style="left:1386px;top:700px;font-size:19px;color:#fff;font-weight:bold">QObject</div><div class="a" style="left:1340px;top:729px;width:560px;height:31px;background:#fdeedc"></div><div class="a" style="left:1637px;top:729px;width:2px;height:31px;background:#e0d8cc"></div><div class="t" style="left:1376px;top:734px;font-size:19px;font-weight:bold">objectName</div><div class="t" style="left:1647px;top:734px;font-size:19px;">fred</div><div class="a" style="left:1340px;top:760px;width:560px;height:2px;background:#c8c8c8"></div><div class="a" style="left:1340px;top:762px;width:560px;height:33px;background:#a0a0a0"></div><div class="a" style="left:1340px;top:795px;width:560px;height:2px;background:#c8c8c8"></div><svg style="left:1353px;top:777px" width="14" height="8"><path d="M0 0 H12 L6 6 Z" fill="#404040"/></svg><div class="t" style="left:1386px;top:769px;font-size:19px;color:#fff;font-weight:bold">QAction</div><div class="a" style="left:1340px;top:797px;width:560px;height:27px;background:#fefbdc"></div><div class="a" style="left:1637px;top:797px;width:2px;height:27px;background:#e0dcc8"></div><div class="t" style="left:1376px;top:803px;font-size:19px;">checkable</div><div class="a" style="left:1647px;top:803px;width:19px;height:19px;background:#fff;border:1px solid #bdbdbd"></div><div class="a" style="left:1900px;top:666px;width:20px;height:158px;background:linear-gradient(90deg,#f0f0f0,#fafafa);border-left:1px solid #d8d8d8"></div><svg style="left:1903px;top:670px" width="14" height="10"><path d="M1 8 L7 1 L13 8 Z" fill="#606060"/></svg><div class="a" style="left:1901px;top:684px;width:19px;height:2px;background:#c8c8c8"></div><div class="a" style="left:1901px;top:724px;width:19px;height:80px;background:#e6e6e6;border-top:1px solid #d0d0d0;border-bottom:1px solid #d0d0d0"></div><svg style="left:1903px;top:809px" width="14" height="10"><path d="M1 1 L7 8 L13 1 Z" fill="#606060"/></svg><div class="a" style="left:1338px;top:588px;width:582px;height:4px;background:#2b2c2d"></div><div class="a" style="left:142px;top:824px;width:1778px;height:50px;background:#404244"></div><div class="t" style="left:153px;top:840px;font-size:18px;color:#e0e0e0">应用程序输出</div><div class="a" style="left:352px;top:834px;width:1px;height:34px;background:#5b5d5f"></div><svg style="left:372px;top:836px" width="30" height="30"><path d="M9 2 V10" stroke="#c8c8c8" stroke-width="3"/><path d="M4 10 H14 L16 22 H1 Z" fill="#c8c8c8"/><path d="M16 14 H28 V29 H14 V24" stroke="#c8c8c8" stroke-width="3" fill="none"/></svg><svg style="left:427px;top:838px" width="18" height="26"><path d="M14 2 L3 13 L14 24" stroke="#5e6062" stroke-width="2.5" fill="none"/></svg><svg style="left:473px;top:838px" width="18" height="26"><path d="M3 2 L14 13 L3 24" stroke="#5e6062" stroke-width="2.5" fill="none"/></svg><svg style="left:520px;top:837px" width="26" height="28"><path d="M0 0 L23 13.5 L0 27 Z" fill="#8fc06a"/></svg><div class="a" style="left:566px;top:838px;width:25px;height:25px;background:#5e6062"></div><svg style="left:616px;top:837px" width="26" height="28"><path d="M0 0 L23 13.5 L0 27 Z" fill="#5e6062"/><g fill="#5e6062" stroke="#404244" stroke-width="1"><ellipse cx="17" cy="20" rx="7" ry="7"/></g></svg><svg style="left:662px;top:838px" width="26" height="26"><path d="M12 1 V25 M0 13 H24" stroke="#d0d0d0" stroke-width="3"/></svg><div class="a" style="left:710px;top:849px;width:25px;height:3px;background:#d0d0d0"></div><svg style="left:1836px;top:843px" width="22" height="14"><path d="M2 12 L11 3 L20 12" stroke="#d8d8d8" stroke-width="2" fill="none"/></svg><svg style="left:1885px;top:842px" width="24" height="22"><rect x="1" y="1" width="22" height="18" fill="none" stroke="#c8c8c8" stroke-width="2"/><path d="M1 5 H23" stroke="#c8c8c8" stroke-width="1.5"/><path d="M7 10 H17 L12 15 Z" fill="#c8c8c8"/></svg><div class="a" style="left:142px;top:874px;width:1778px;height:46px;background:#efefef"></div><div class="a" style="left:142px;top:919px;width:1778px;height:2px;background:#c0c0c0"></div><div class="a" style="left:143px;top:875px;width:162px;height:46px;background:linear-gradient(#fff,#f6f6f6);border:1px solid #b8b8b8;border-bottom:none;border-radius:4px 4px 0 0"></div><div class="t m" style="left:160px;top:891px;font-size:17px;letter-spacing:-1.2px">untitled23</div><svg style="left:256px;top:886px" width="28" height="26"><path d="M21 2.5 Q23.5 0.5 25 2.5 Q25.5 4.5 23 7 L4.5 24.5 L1 25 Z" fill="#111"/><path d="M6.3 1.5 L7.3 1.8 L25 18.5 Q26.5 21 25.5 24 L22 22.5 L14 13.5 Z" fill="#111"/></svg><div class="a" style="left:142px;top:921px;width:1758px;height:108px;background:#fff"></div><div class="t m" style="left:150px;top:928px;font-size:19.7px;color:#000">QPoint(730,389)</div><div class="t m" style="left:150px;top:979px;font-size:20px;color:#0000aa;font-weight:bold">14:41:53: E:/study/qt/code/build-untitled23-Desktop_Qt_5_13_0_MinGW_32_bit-Debug/debug/untitled23.exe exited with code 0</div><div class="a" style="left:1900px;top:921px;width:20px;height:108px;background:linear-gradient(90deg,#f0f0f0,#fafafa);border-left:1px solid #d8d8d8"></div><svg style="left:1903px;top:925px" width="14" height="10"><path d="M1 8 L7 1 L13 8 Z" fill="#606060"/></svg><div class="a" style="left:1901px;top:939px;width:19px;height:2px;background:#c8c8c8"></div><div class="a" style="left:1901px;top:941px;width:19px;height:26px;background:#ececec;border-bottom:1px solid #d0d0d0"></div><div class="a" style="left:1901px;top:1007px;width:19px;height:2px;background:#c8c8c8"></div><svg style="left:1903px;top:1013px" width="14" height="10"><path d="M1 1 L7 8 L13 1 Z" fill="#606060"/></svg><div class="a" style="left:142px;top:1029px;width:1778px;height:51px;background:#404244"></div><div class="a" style="left:158px;top:1044px;width:22px;height:22px;background:#636466"></div><div class="a" style="left:168px;top:1046px;width:10px;height:18px;background:#404244"></div><div class="a" style="left:202px;top:1034px;width:400px;height:42px;background:#fff"></div><svg style="left:220px;top:1040px" width="36" height="32"><circle cx="17" cy="10.5" r="7.8" fill="none" stroke="#606060" stroke-width="2.5"/><path d="M11.5 16 L3.5 24" stroke="#606060" stroke-width="3.2" stroke-linecap="square"/><path d="M22 24 H32 L27 29 Z" fill="#606060"/></svg><div class="t" style="left:266px;top:1045px;font-size:19px;color:#808080">Type to locate (Ctrl+K)</div><div class="a" style="left:609px;top:1036px;width:1px;height:40px;background:#5b5d5f"></div><div class="a" style="left:906px;top:1034px;width:152px;height:42px;background:#262829"></div><div class="t m" style="left:630px;top:1048px;font-size:17px;color:#e0e0e0;letter-spacing:-1.1px">1</div><div class="t" style="left:657px;top:1047px;font-size:18px;color:#e0e0e0">问题</div><div class="t m" style="left:728px;top:1048px;font-size:17px;color:#e0e0e0;letter-spacing:-1.1px">2</div><div class="t m" style="left:754px;top:1048px;font-size:17px;color:#e0e0e0;letter-spacing:-1.1px">Search Results</div><div class="t m" style="left:916px;top:1048px;font-size:17px;color:#e0e0e0;letter-spacing:-1.1px">3</div><div class="t" style="left:943px;top:1047px;font-size:18px;color:#e0e0e0">应用程序输出</div><div class="t m" style="left:1086px;top:1048px;font-size:17px;color:#e0e0e0;letter-spacing:-1.1px">4</div><div class="t" style="left:1112px;top:1047px;font-size:18px;color:#e0e0e0">编译输出</div><div class="t m" style="left:1220px;top:1048px;font-size:17px;color:#e0e0e0;letter-spacing:-1.1px">5</div><div class="t m" style="left:1246px;top:1048px;font-size:17px;color:#e0e0e0;letter-spacing:-1.1px">QML Debugger Console</div><div class="t m" style="left:1460px;top:1048px;font-size:17px;color:#e0e0e0;letter-spacing:-1.1px">6</div><div class="t" style="left:1486px;top:1047px;font-size:18px;color:#e0e0e0">概要信息</div><div class="t m" style="left:1594px;top:1048px;font-size:17px;color:#e0e0e0;letter-spacing:-1.1px">8</div><div class="t m" style="left:1620px;top:1048px;font-size:17px;color:#e0e0e0;letter-spacing:-1.1px">Test Results</div><svg style="left:1766px;top:1044px" width="16" height="24"><path d="M1 9 L7.5 2 L14 9 Z M1 14 L7.5 21 L14 14 Z" fill="#c8c8c8"/></svg><svg style="left:1838px;top:1046px" width="16" height="10"><path d="M1 8 L7.5 1 L14 8 Z" fill="#c8c8c8"/></svg><div class="a" style="left:1884px;top:1044px;width:22px;height:22px;background:#636466"></div><div class="a" style="left:1886px;top:1046px;width:10px;height:18px;background:#404244"></div><div class="a" style="left:0px;top:1078px;width:1920px;height:2px;background:#161717"></div><div class="a" style="left:72px;top:1078px;width:516px;height:2px;background:#f2f2f2"></div>
</body></html>
